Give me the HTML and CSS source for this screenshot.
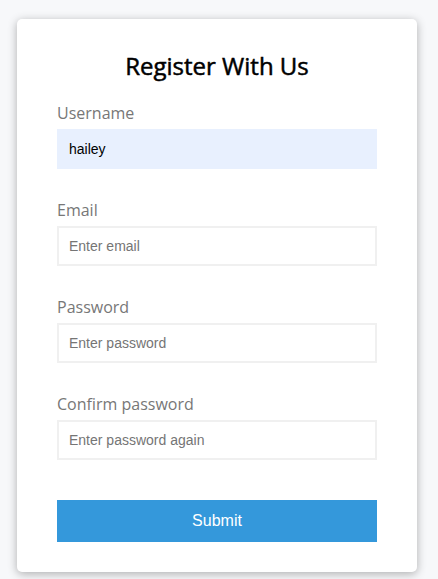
FILE: index.html
```html
<!DOCTYPE html>
<html lang="en">
<head>
    <meta charset="UTF-8">
    <meta name="viewport" content="width=device-width, initial-scale=1.0">
    <title>Register With Us</title>
    <link rel="stylesheet" href="styles.css">
</head>
<body>
    <div class="container">
        <form class="form" id="form">
            <h2>Register With Us</h2>
            <div class="form-control">
                <label for="username">Username</label>
                <input type="text" id="username" class="autofilled" value="hailey" placeholder="Enter username">
            </div>
            <div class="form-control">
                <label for="email">Email</label>
                <input type="text" id="email" placeholder="Enter email">
            </div>
            <div class="form-control">
                <label for="password">Password</label>
                <input type="password" id="password" placeholder="Enter password">
            </div>
            <div class="form-control">
                <label for="password2">Confirm password</label>
                <input type="password" id="password2" placeholder="Enter password again">
            </div>
            <button type="submit">Submit</button>
        </form>
    </div>
</body>
</html>
```

FILE: styles.css
```css
* {
    box-sizing: border-box;
}

body {
    background-color: #f7f8fa;
    font-family: 'Open Sans', sans-serif;
    display: flex;
    align-items: flex-start;
    min-height: 100vh;
    margin: 0;
    padding: 19px 0 0 17px;
}

.container {
    background-color: #fff;
    border-radius: 5px;
    box-shadow: 0 2px 10px rgba(0, 0, 0, 0.3);
    width: 400px;
}

h2 {
    text-align: center;
    font-size: 24px;
    font-weight: normal;
    -webkit-text-stroke: 0.5px #000;
    margin: 0 0 20px;
}

.form {
    padding: 30px 40px;
}

.form-control {
    margin-bottom: 10px;
    padding-bottom: 20px;
}

.form-control label {
    color: #777;
    display: block;
    margin-bottom: 5px;
}

.form-control input {
    border: 2px solid #f0f0f0;
    display: block;
    width: 100%;
    padding: 10px;
    font-family: 'Liberation Sans', Arial, sans-serif;
    font-size: 14px;
    color: #000;
}

.form-control input::placeholder {
    color: #757575;
}

.form-control input.autofilled {
    background-color: #e8f0fe;
    border-color: #e8f0fe;
}

.form button {
    cursor: pointer;
    background-color: #3498db;
    border: 2px solid #3498db;
    color: #fff;
    display: block;
    font-family: 'Liberation Sans', Arial, sans-serif;
    font-size: 16px;
    padding: 10px;
    margin-top: 20px;
    width: 100%;
}
```
